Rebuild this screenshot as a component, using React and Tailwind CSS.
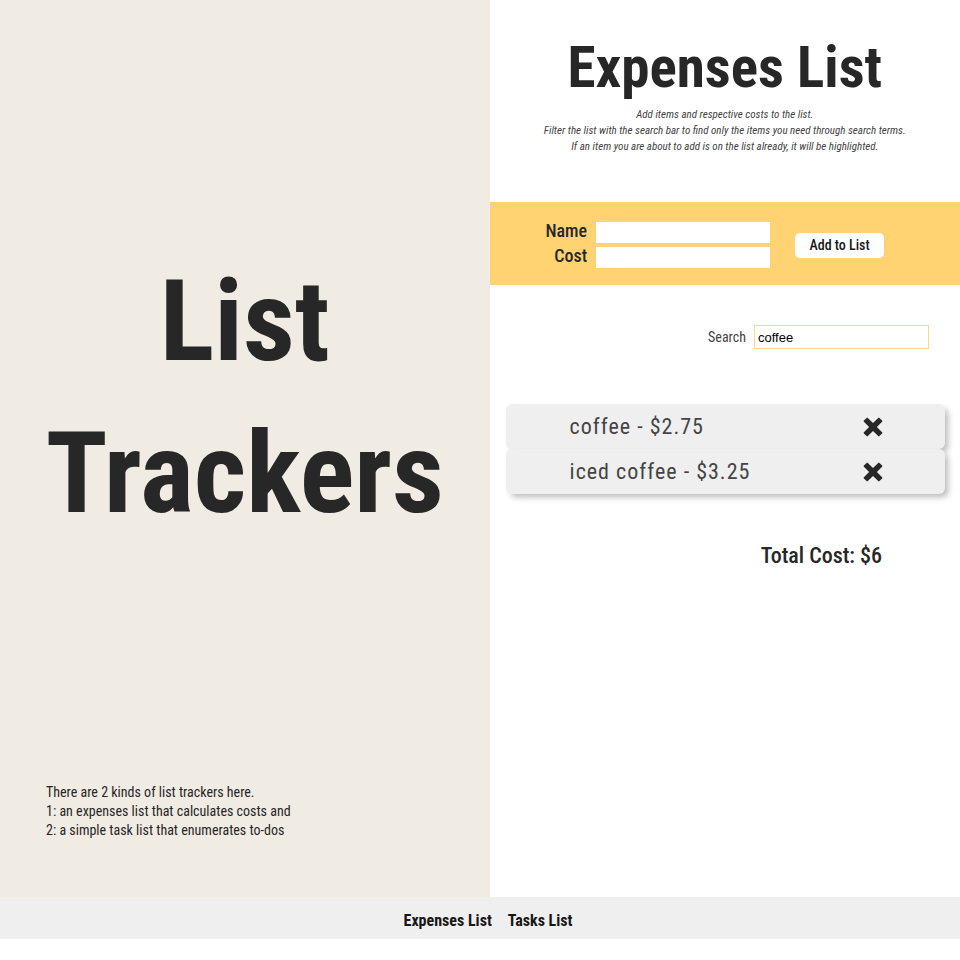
import { useState } from "react";

const initialItems = [
  { id: 1, name: "coffee", cost: 2.75 },
  { id: 2, name: "iced coffee", cost: 3.25 },
];

function CrossIcon() {
  return (
    <svg width="20" height="20" viewBox="0 0 20 20" aria-hidden="true">
      <path
        d="M3.6 0.9 0.9 3.6a.8.8 0 0 0 0 1.2L6.1 10l-5.2 5.2a.8.8 0 0 0 0 1.2l2.7 2.7a.8.8 0 0 0 1.2 0L10 13.9l5.2 5.2a.8.8 0 0 0 1.2 0l2.7-2.7a.8.8 0 0 0 0-1.2L13.9 10l5.2-5.2a.8.8 0 0 0 0-1.2L16.4.9a.8.8 0 0 0-1.2 0L10 6.1 4.8.9a.8.8 0 0 0-1.2 0Z"
        fill="#272727"
      />
    </svg>
  );
}

function Intro() {
  return (
    <section className="flex w-[51%] flex-col justify-between bg-[#f0ebe3] pt-[245px] pb-[57px]">
      <h1 className="text-center text-[114px] leading-[152px] font-bold">
        List
        <br />
        Trackers
      </h1>
      <p className="px-[46px] text-[14px] leading-[19px]">
        There are 2 kinds of list trackers here.
        <br />
        1: an expenses list that calculates costs and
        <br />
        2: a simple task list that enumerates to-dos
      </p>
    </section>
  );
}

function AddForm() {
  return (
    <form
      className="flex items-center justify-center gap-[25px] bg-[#ffd272] pt-5 pr-5 pb-[17px]"
      onSubmit={(e) => e.preventDefault()}
    >
      <div className="grid grid-cols-[auto_174px] items-center gap-x-[9px] gap-y-1 text-right text-[18px] leading-[18px] font-medium">
        <label htmlFor="name" className="pb-[3px]">
          Name
        </label>
        <input id="name" type="text" className="h-[21px] bg-white px-1 text-sm" />
        <label htmlFor="cost" className="pb-[3px]">
          Cost
        </label>
        <input id="cost" type="text" className="h-[21px] bg-white px-1 text-sm" />
      </div>
      <button
        type="submit"
        className="h-[25px] w-[89px] rounded-[5px] bg-white text-[14px] leading-[20px] font-medium text-[#171717]"
      >
        Add to List
      </button>
    </form>
  );
}

function Expenses() {
  const [query, setQuery] = useState("coffee");
  const [items, setItems] = useState(initialItems);
  const shown = items.filter((item) => item.name.includes(query));
  const total = shown.reduce((sum, item) => sum + item.cost, 0);

  return (
    <section className="flex-1 bg-white pt-[30px] pb-[324px]">
      <header className="pb-[47px] text-center">
        <h2 className="pb-[2px] text-[57px] leading-[75px] font-bold">Expenses List</h2>
        <p className="text-[11px] leading-[16px] text-[#444444] italic">
          Add items and respective costs to the list.
          <br />
          Filter the list with the search bar to find only the items you need through search terms.
          <br />
          If an item you are about to add is on the list already, it will be highlighted.
        </p>
      </header>
      <AddForm />
      <div className="flex items-center justify-end gap-2 px-[31px] pt-10 pb-[55px]">
        <label htmlFor="search" className="text-[14px] leading-[20px] text-[#444444]">
          Search
        </label>
        <input
          id="search"
          type="text"
          value={query}
          onChange={(e) => setQuery(e.target.value)}
          className="h-6 w-[175px] border border-[#ffd980] bg-white px-[3px] font-['Liberation_Sans',sans-serif] text-[13px] text-black"
        />
      </div>
      <ul className="pr-[15px] pl-4">
        {shown.map((item) => (
          <li
            key={item.id}
            className="flex items-center justify-between rounded-md bg-[#efefef] pr-[62px] pl-16 text-[22px] leading-[45px] tracking-[1px] text-[#444444] shadow-[4px_4px_6px_-1px_rgba(0,0,0,0.28)]"
          >
            <span>
              {item.name} - ${item.cost}
            </span>
            <button
              type="button"
              aria-label={"Remove " + item.name}
              onClick={() => setItems(items.filter((other) => other.id !== item.id))}
            >
              <CrossIcon />
            </button>
          </li>
        ))}
      </ul>
      <p className="px-[78px] pt-[45px] text-right text-[22px] leading-[34px] font-medium">
        Total Cost: ${total}
      </p>
    </section>
  );
}

export default function App() {
  return (
    <div className="bg-white font-['Liberation_Sans_Narrow','Roboto_Condensed',Roboto,sans-serif] text-[#272727]">
      <main className="flex">
        <Intro />
        <Expenses />
      </main>
      <nav className="flex justify-center gap-4 bg-[#efefef] pt-[11px] pb-[6px] pl-4 text-[16px] leading-[25px] font-bold text-[#171717]">
        <a href="#expenses">Expenses List</a>
        <a href="#tasks">Tasks List</a>
      </nav>
    </div>
  );
}
